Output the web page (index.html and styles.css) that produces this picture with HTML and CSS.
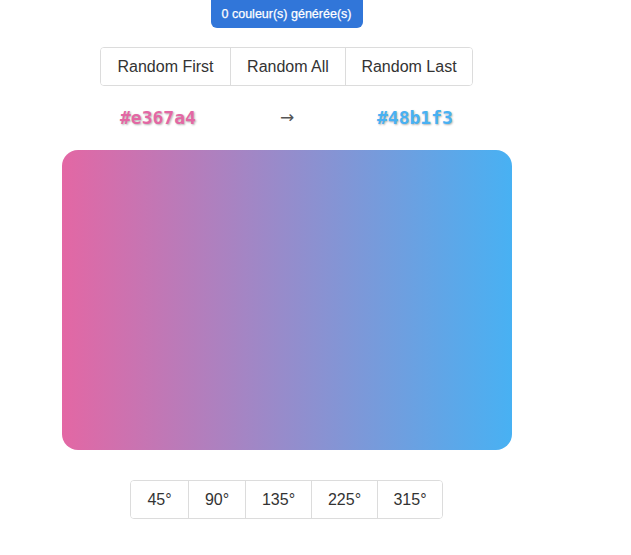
FILE: index.html
```html
<!DOCTYPE html>
<html>
<head>
<meta charset="utf-8">
<link rel="stylesheet" href="styles.css">
</head>
<body>
<div class="app">
  <div class="badge">0 couleur(s) générée(s)</div>
  <div class="btn-group top-group">
    <button class="btn">Random First</button>
    <button class="btn">Random All</button>
    <button class="btn">Random Last</button>
  </div>
  <div class="hex-row">
    <span class="hex hex-first">#e367a4</span>
    <span class="arrow">→</span>
    <span class="hex hex-last">#48b1f3</span>
  </div>
  <div class="gradient"></div>
  <div class="btn-group angle-group">
    <button class="btn angle">45°</button>
    <button class="btn angle">90°</button>
    <button class="btn angle">135°</button>
    <button class="btn angle">225°</button>
    <button class="btn angle">315°</button>
  </div>
</div>
</body>
</html>
```
FILE: styles.css
```css
html, body {
  margin: 0;
  padding: 0;
  background: #fff;
}
body {
  font-family: "Liberation Sans", Arial, sans-serif;
}
.app {
  width: 573px;
  display: flex;
  flex-direction: column;
  align-items: center;
}
.badge {
  box-sizing: border-box;
  background: #3176d9;
  color: #fff;
  font-size: 12.5px;
  font-weight: normal;
  -webkit-text-stroke: 0.25px #fff;
  height: 28px;
  line-height: 28px;
  width: 152px;
  white-space: nowrap;
  text-align: center;
  border-radius: 0 0 6px 6px;
}
.btn-group {
  display: flex;
  border: 1px solid #dcdcdc;
  border-radius: 4px;
  overflow: hidden;
}
.top-group {
  margin-top: 19px;
}
.btn {
  box-sizing: border-box;
  font-family: "Liberation Sans", Arial, sans-serif;
  font-size: 16px;
  color: #333;
  background: #fff;
  border: none;
  border-left: 1px solid #dcdcdc;
  height: 37px;
  padding: 0;
  margin: 0;
  white-space: nowrap;
}
.btn:first-child {
  border-left: none;
}
.top-group .btn:nth-child(1) { width: 129px; }
.top-group .btn:nth-child(2) { width: 115px; }
.top-group .btn:nth-child(3) { width: 127px; }
.hex-row {
  display: flex;
  align-items: center;
  height: 28px;
  margin-top: 17px;
}
.hex {
  font-family: "DejaVu Sans Mono", monospace;
  font-size: 18px;
  font-weight: bold;
  text-shadow: 1px 1px 2px rgba(0,0,0,0.3);
  width: 76px;
}
.hex-first { color: #e367a4; }
.hex-last { color: #48b1f3; }
.arrow {
  font-family: "DejaVu Sans", sans-serif;
  color: #555;
  font-size: 17px;
  width: 16px;
  margin: 0 82px 0 83px;
  text-align: center;
}
.gradient {
  width: 450px;
  height: 300px;
  margin-top: 19px;
  border-radius: 16px;
  background: linear-gradient(90deg, #e367a4, #48b1f3);
}
.angle-group {
  margin-top: 30px;
}
.angle-group .btn:nth-child(1) { width: 57px; }
.angle-group .btn:nth-child(2) { width: 57px; }
.angle-group .btn:nth-child(3) { width: 66px; }
.angle-group .btn:nth-child(4) { width: 66px; }
.angle-group .btn:nth-child(5) { width: 65px; }
```
